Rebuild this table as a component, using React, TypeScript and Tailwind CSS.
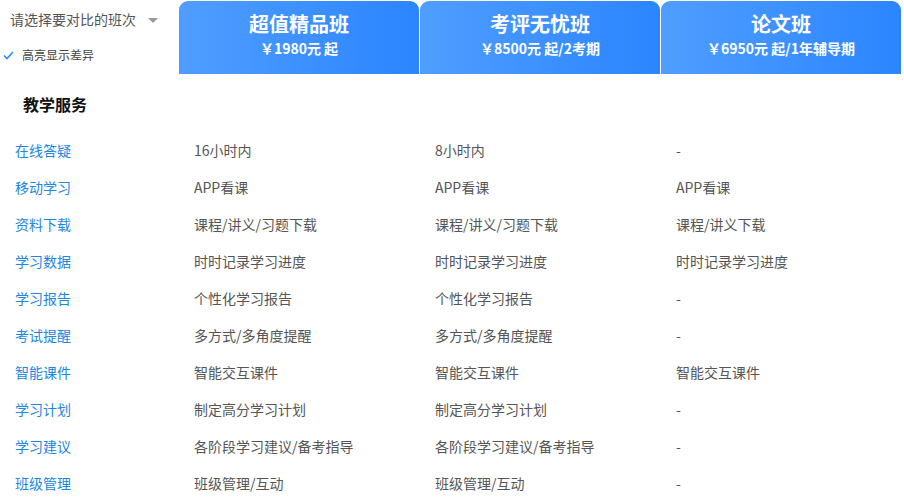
import React from "react";

type Plan = {
  name: string;
  price: string;
};

const plans: Plan[] = [
  { name: "超值精品班", price: "￥1980元 起" },
  { name: "考评无忧班", price: "￥8500元 起/2考期" },
  { name: "论文班", price: "￥6950元 起/1年辅导期" },
];

// each row: label + one value per plan
const rows: [string, string, string, string][] = [
  ["在线答疑", "16小时内", "8小时内", "-"],
  ["移动学习", "APP看课", "APP看课", "APP看课"],
  ["资料下载", "课程/讲义/习题下载", "课程/讲义/习题下载", "课程/讲义下载"],
  ["学习数据", "时时记录学习进度", "时时记录学习进度", "时时记录学习进度"],
  ["学习报告", "个性化学习报告", "个性化学习报告", "-"],
  ["考试提醒", "多方式/多角度提醒", "多方式/多角度提醒", "-"],
  ["智能课件", "智能交互课件", "智能交互课件", "智能交互课件"],
  ["学习计划", "制定高分学习计划", "制定高分学习计划", "-"],
  ["学习建议", "各阶段学习建议/备考指导", "各阶段学习建议/备考指导", "-"],
  ["班级管理", "班级管理/互动", "班级管理/互动", "-"],
];

const font = { fontFamily: '"Noto Sans CJK SC", "Liberation Sans", sans-serif' };

export default function App() {
  return (
    <div className="w-[904px] h-[503px] overflow-hidden bg-white" style={font}>
      {/* Header */}
      <div className="flex pt-px">
        <div className="w-[179px] shrink-0">
          <div className="flex items-center h-[36px] pl-[10px] pt-[1px]">
            <span className="text-[14px] text-[#555]">请选择要对比的班次</span>
            <span className="ml-[12px] mt-[1px] w-0 h-0 border-l-[5px] border-r-[5px] border-t-[5px] border-l-transparent border-r-transparent border-t-[#999]"></span>
          </div>
          <div className="flex items-center h-[36px] pl-[3px]">
            <svg width="11" height="9" viewBox="0 0 11 9" className="mr-[8px]">
              <path d="M1 4.5 L4 7.5 L10 1" stroke="#2e8cf0" strokeWidth="1.6" fill="none" />
            </svg>
            <span className="text-[12px] text-[#444]">高亮显示差异</span>
          </div>
        </div>
        <div className="flex gap-px">
          {plans.map((p) => (
            <div
              key={p.name}
              className="w-[240px] h-[73px] rounded-t-[9px] bg-gradient-to-r from-[#4f9dff] to-[#2a85ff] flex flex-col items-center text-white"
            >
              <div className="mt-[9px] text-[20px] font-bold leading-[28px]">{p.name}</div>
              <div className="mt-[1px] text-[14px] font-bold leading-[18px]">{p.price}</div>
            </div>
          ))}
        </div>
      </div>

      {/* Section title */}
      <div className="pl-[23px] mt-[18px] h-[24px] flex items-center text-[16px] font-bold text-[#111]">教学服务</div>

      {/* Rows */}
      <div className="mt-[16px]">
        {rows.map((r) => (
          <div key={r[0]} className="flex h-[37px] items-center text-[14px]">
            <div className="w-[194px] shrink-0 pl-[15px] text-[#1d86e0]">{r[0]}</div>
            <div className="w-[241px] shrink-0 text-[#555]">{r[1]}</div>
            <div className="w-[241px] shrink-0 text-[#555]">{r[2]}</div>
            <div className="text-[#555]">{r[3]}</div>
          </div>
        ))}
      </div>
    </div>
  );
}
